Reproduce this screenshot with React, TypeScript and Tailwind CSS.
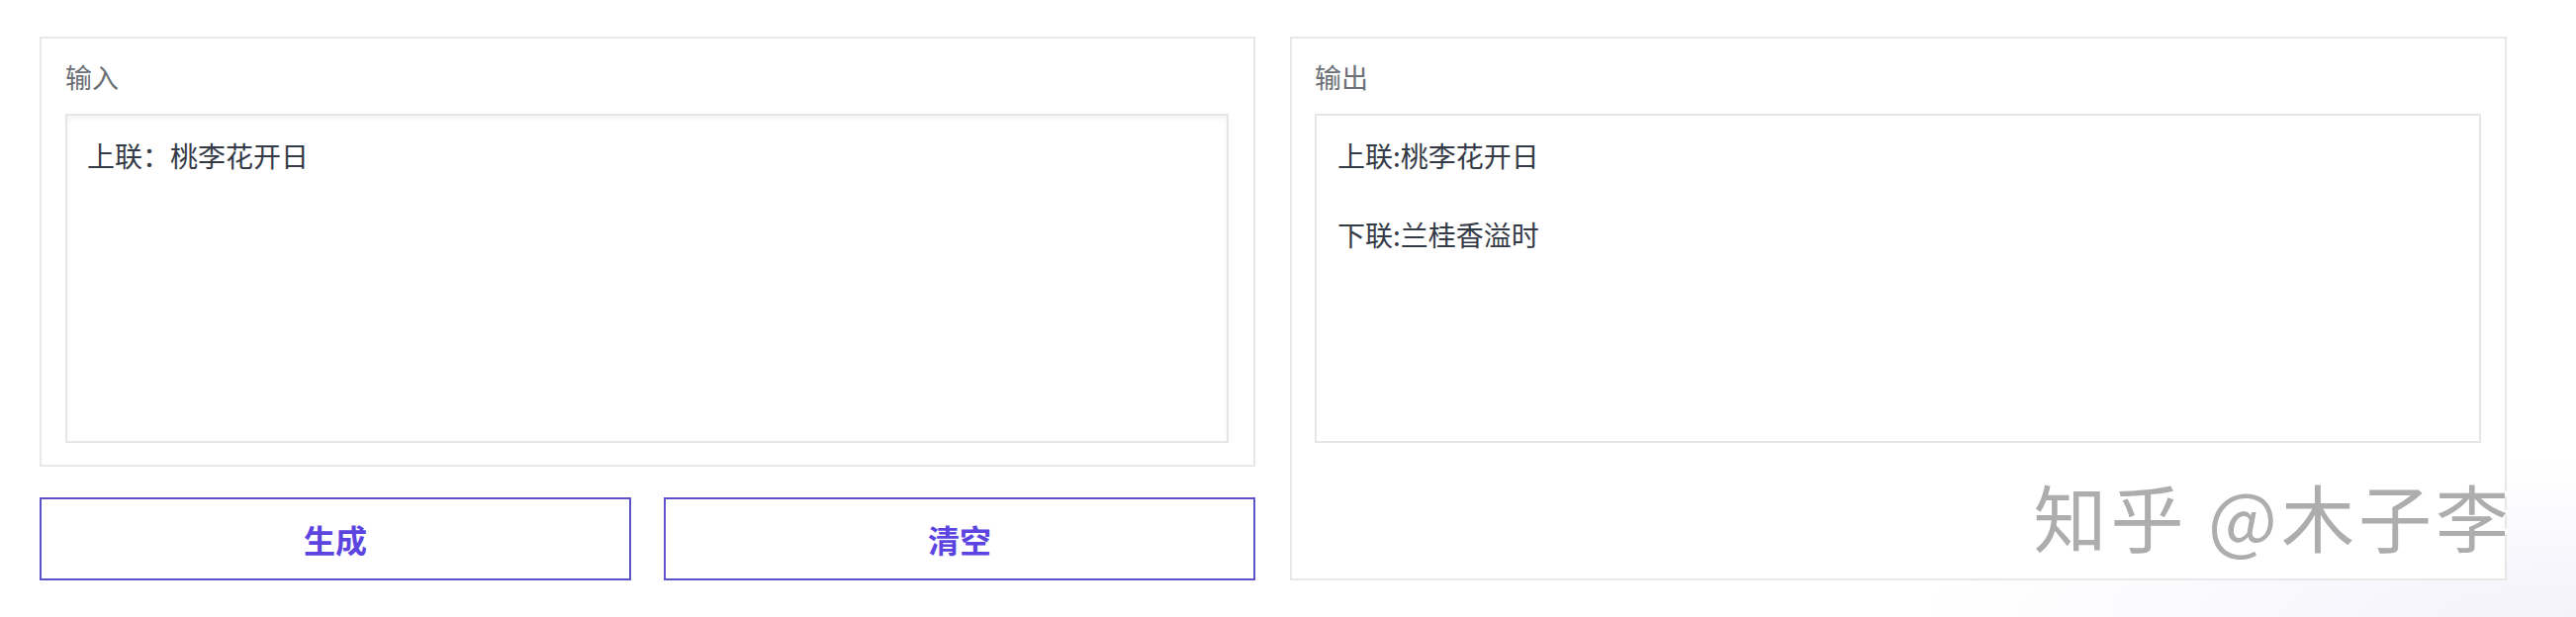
import React from "react"

// Couplet generator: input card + buttons on the left, output card on the right

const FONT = "font-['Noto_Sans_CJK_SC','Noto_Sans',sans-serif]"

const App: React.FC = () => {
    const input = "上联：桃李花开日"
    const output = "上联:桃李花开日\n\n下联:兰桂香溢时"

    return (
        <div className={`relative w-[2604px] h-[624px] overflow-hidden bg-white ${FONT}`}>
            {/* faint tint at the right edge */}
            <div className="absolute inset-0 bg-[radial-gradient(ellipse_at_100%_100%,rgba(244,242,251,1)_0%,rgba(255,255,255,0)_18%)]" />

            <div className="relative flex gap-[35px] pl-[40px] pt-[37px]">
                {/* Left Column */}
                <div className="w-[1229px] flex flex-col gap-[31px]">
                    <div className="h-[435px] border-2 border-[#e8e8e8] bg-white pt-[21px] pl-[24px] pr-[25px] pb-[22px] flex flex-col">
                        <div className="text-[27px] leading-[36px] text-[#6b6f76] mb-[19px]">输入</div>
                        <textarea
                            defaultValue={input}
                            className={`flex-1 w-full resize-none outline-none border-2 border-[#e6e6e6] shadow-[inset_0_3px_5px_rgba(0,0,0,0.05)] px-[20px] py-[20px] text-[28px] leading-[40px] text-[#343a46] ${FONT}`}
                        />
                    </div>
                    <div className="flex gap-[33px]">
                        <button className="w-[598px] h-[84px] border-2 border-[#5e52c8] bg-white text-[32px] font-bold text-[#5b44e0]">
                            生成
                        </button>
                        <button className="w-[598px] h-[84px] border-2 border-[#5e52c8] bg-white text-[32px] font-bold text-[#5b44e0]">
                            清空
                        </button>
                    </div>
                </div>

                {/* Right Column */}
                <div className="w-[1230px] h-[550px] border-2 border-[#e8e8e8] bg-white pt-[21px] pl-[23px] pr-[24px]">
                    <div className="text-[27px] leading-[36px] text-[#6b6f76] mb-[19px]">输出</div>
                    <div className="h-[333px] border-2 border-[#e6e6e6] px-[21px] py-[20px] text-[28px] leading-[40px] text-[#343a46] whitespace-pre-wrap">
                        {output}
                    </div>
                </div>
            </div>

            {/* watermark */}
            <div className="absolute top-[484px] right-[64px] text-[74px] leading-none tracking-[4px] text-[#adadad] [text-shadow:3px_-2px_0_rgba(255,255,255,0.9)] whitespace-nowrap">
                知乎 @木子李
            </div>
        </div>
    )
}

export default App
